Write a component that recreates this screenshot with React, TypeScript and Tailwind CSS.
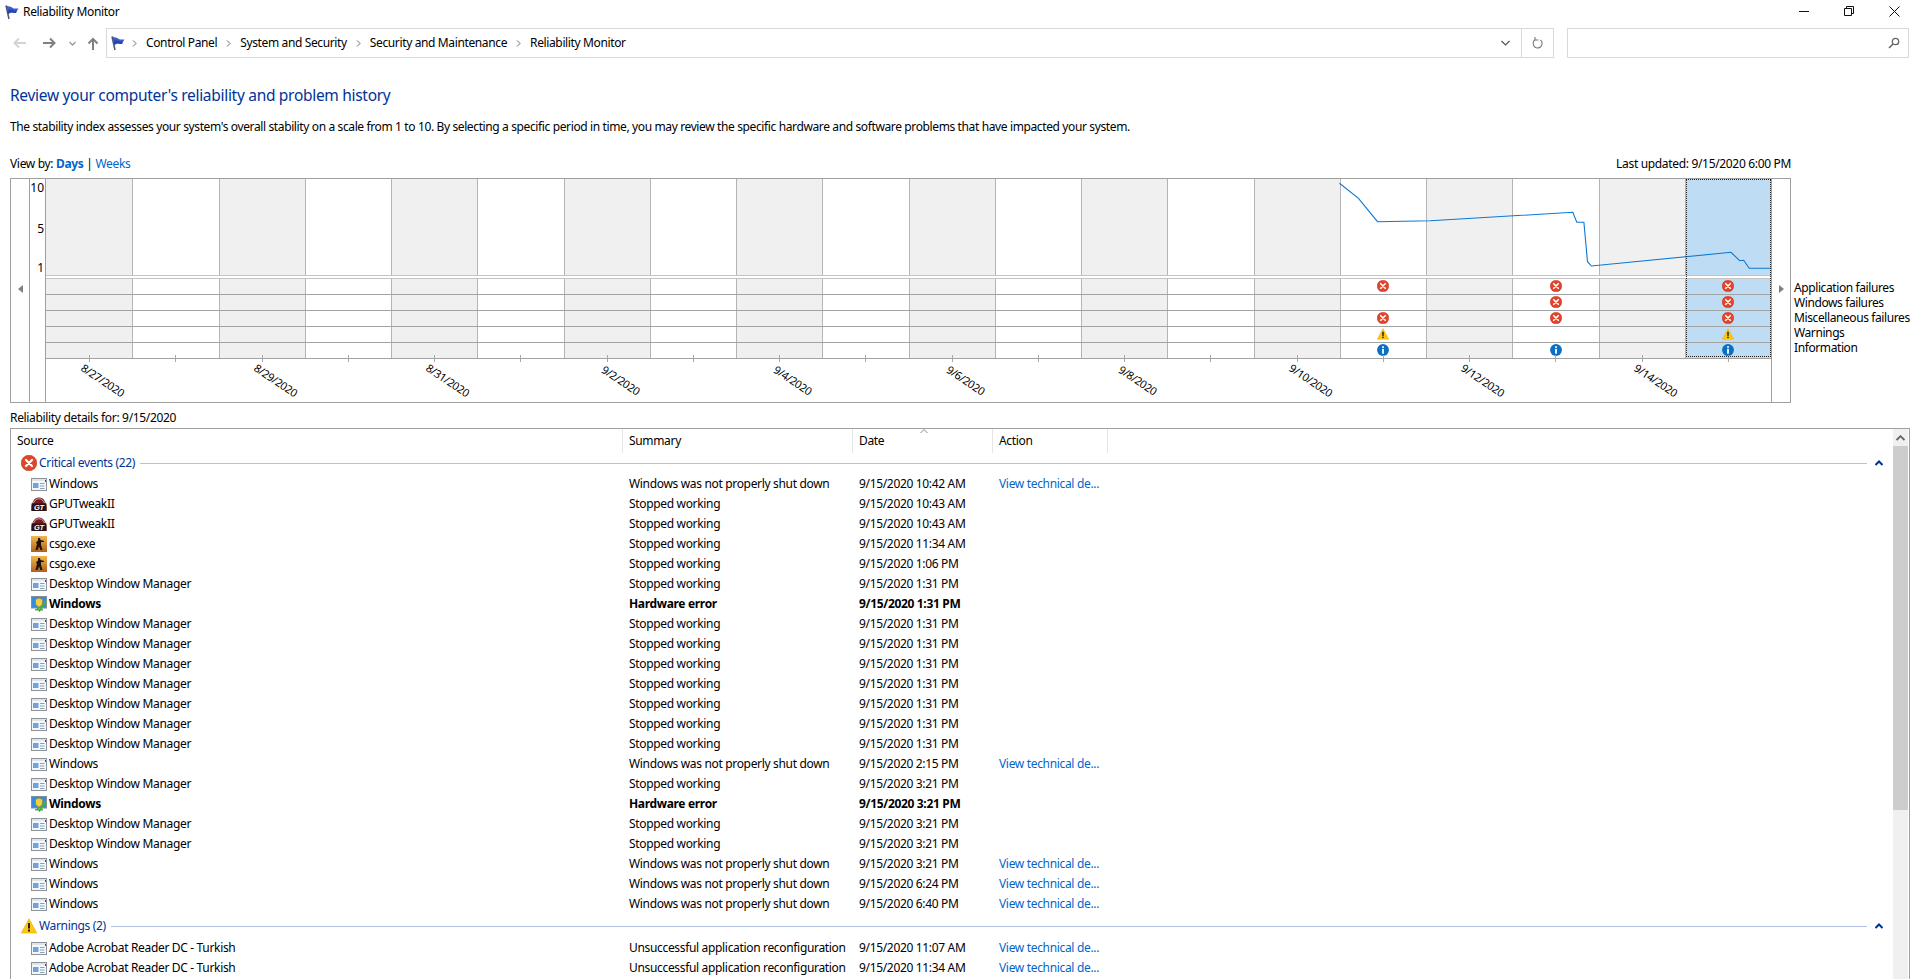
const columns = Array.from({ length: 20 }, (_, i) => i)

const dateLabels: Record<number, string> = {
  0: "8/27/2020",
  2: "8/29/2020",
  4: "8/31/2020",
  6: "9/2/2020",
  8: "9/4/2020",
  10: "9/6/2020",
  12: "9/8/2020",
  14: "9/10/2020",
  16: "9/12/2020",
  18: "9/14/2020",
}

// row -> column -> icon
const chartRows: Record<number, string>[] = [
  { 15: "error", 17: "error", 19: "error" },
  { 17: "error", 19: "error" },
  { 15: "error", 17: "error", 19: "error" },
  { 15: "warn", 19: "warn" },
  { 15: "info", 17: "info", 19: "info" },
]

const legend = ["Application failures", "Windows failures", "Miscellaneous failures", "Warnings", "Information"]

const SHUT = "Windows was not properly shut down"
const STOP = "Stopped working"
const DWM = "Desktop Window Manager"

type Row = { icon: string; source: string; summary: string; date: string; link?: boolean; bold?: boolean }

const critical: Row[] = [
  { icon: "app", source: "Windows", summary: SHUT, date: "9/15/2020 10:42 AM", link: true },
  { icon: "gpu", source: "GPUTweakII", summary: STOP, date: "9/15/2020 10:43 AM" },
  { icon: "gpu", source: "GPUTweakII", summary: STOP, date: "9/15/2020 10:43 AM" },
  { icon: "cs", source: "csgo.exe", summary: STOP, date: "9/15/2020 11:34 AM" },
  { icon: "cs", source: "csgo.exe", summary: STOP, date: "9/15/2020 1:06 PM" },
  { icon: "app", source: DWM, summary: STOP, date: "9/15/2020 1:31 PM" },
  { icon: "hw", source: "Windows", summary: "Hardware error", date: "9/15/2020 1:31 PM", bold: true },
  { icon: "app", source: DWM, summary: STOP, date: "9/15/2020 1:31 PM" },
  { icon: "app", source: DWM, summary: STOP, date: "9/15/2020 1:31 PM" },
  { icon: "app", source: DWM, summary: STOP, date: "9/15/2020 1:31 PM" },
  { icon: "app", source: DWM, summary: STOP, date: "9/15/2020 1:31 PM" },
  { icon: "app", source: DWM, summary: STOP, date: "9/15/2020 1:31 PM" },
  { icon: "app", source: DWM, summary: STOP, date: "9/15/2020 1:31 PM" },
  { icon: "app", source: DWM, summary: STOP, date: "9/15/2020 1:31 PM" },
  { icon: "app", source: "Windows", summary: SHUT, date: "9/15/2020 2:15 PM", link: true },
  { icon: "app", source: DWM, summary: STOP, date: "9/15/2020 3:21 PM" },
  { icon: "hw", source: "Windows", summary: "Hardware error", date: "9/15/2020 3:21 PM", bold: true },
  { icon: "app", source: DWM, summary: STOP, date: "9/15/2020 3:21 PM" },
  { icon: "app", source: DWM, summary: STOP, date: "9/15/2020 3:21 PM" },
  { icon: "app", source: "Windows", summary: SHUT, date: "9/15/2020 3:21 PM", link: true },
  { icon: "app", source: "Windows", summary: SHUT, date: "9/15/2020 6:24 PM", link: true },
  { icon: "app", source: "Windows", summary: SHUT, date: "9/15/2020 6:40 PM", link: true },
]

const warnings: Row[] = [
  { icon: "app", source: "Adobe Acrobat Reader DC - Turkish", summary: "Unsuccessful application reconfiguration", date: "9/15/2020 11:07 AM", link: true },
  { icon: "app", source: "Adobe Acrobat Reader DC - Turkish", summary: "Unsuccessful application reconfiguration", date: "9/15/2020 11:34 AM", link: true },
]

const stabilityLine =
  "1339.5,183.3 1358.5,198.3 1377.5,221.7 1430.5,220.7 1572.8,212.3 1576.8,222.3 1583.9,222.3 1587.5,261.7 1591.4,266 1731,252.3 1739.7,260.7 1743.7,260.3 1749.2,268.3 1770.5,268.3"

function Flag() {
  return (
    <svg width="16" height="16" viewBox="0 0 16 16">
      <path d="M3 1.5 L6 15" stroke="#4a5675" strokeWidth="1.5" fill="none" />
      <path d="M3.5 1.5 C6 3 7 2 9 3.5 C11 5 13 4.5 15.5 4.5 C14.5 6 14 7 13 9 C11 9.5 9.5 8 8 8.5 C7 8.8 6 9.5 5 10 Z" fill="#3b5bd0" />
      <path d="M4.5 6 C7 5 10 6 13.5 7 L13 9 C11 9.5 9.5 8 8 8.5 C7 8.8 6 9.5 5 10 Z" fill="#2a44aa" />
    </svg>
  )
}

function ErrorDot({ size = 12 }: { size?: number }) {
  return (
    <svg width={size} height={size} viewBox="0 0 16 16">
      <circle cx="8" cy="8" r="7.8" fill="#e0452b" />
      <circle cx="8" cy="8" r="7.8" fill="none" stroke="#c4341c" strokeWidth="0.6" />
      <path d="M5 5 L11 11 M11 5 L5 11" stroke="#ffffff" strokeWidth="2.2" strokeLinecap="round" />
    </svg>
  )
}

function WarnDot({ size = 12 }: { size?: number }) {
  return (
    <svg width={size} height={size} viewBox="0 0 16 16">
      <path d="M8 0.8 L15.8 15 L0.2 15 Z" fill="#fcc813" stroke="#e8ac0c" strokeWidth="0.6" />
      <rect x="7" y="5" width="2" height="5.5" fill="#222222" />
      <rect x="7" y="11.5" width="2" height="2" fill="#222222" />
    </svg>
  )
}

function InfoDot() {
  return (
    <svg width="12" height="12" viewBox="0 0 16 16">
      <circle cx="8" cy="8" r="7.9" fill="#0b6fc4" />
      <rect x="6.8" y="6.5" width="2.4" height="6.5" fill="#ffffff" />
      <rect x="6.8" y="3" width="2.4" height="2.2" fill="#ffffff" />
    </svg>
  )
}

function RowIcon({ kind }: { kind: string }) {
  if (kind === "gpu") {
    return (
      <svg width="16" height="15" viewBox="0 0 16 15">
        <path d="M0.5 14 C0 6 3 0.5 8 0.5 C13 0.5 16 6 15.5 14 Z" fill="#7a1a1f" />
        <path d="M2.5 6 C4 2.6 6 1.8 8 1.8 C10 1.8 12 2.6 13.5 6" stroke="#d8b4b4" strokeWidth="1" fill="none" />
        <rect x="0.5" y="6.5" width="15" height="7.5" fill="#2a1215" />
        <text x="8" y="13" textAnchor="middle" fontSize="7.5" fontWeight="700" fontStyle="italic" fill="#ffffff" fontFamily="Liberation Sans, sans-serif">
          GT
        </text>
      </svg>
    )
  }
  if (kind === "cs") {
    return (
      <svg width="16" height="16" viewBox="0 0 16 16">
        <defs>
          <linearGradient id="csBg" x1="0" y1="0" x2="0" y2="1">
            <stop offset="0" stopColor="#f2b650" />
            <stop offset="1" stopColor="#b0601c" />
          </linearGradient>
        </defs>
        <rect width="16" height="16" fill="url(#csBg)" />
        <path d="M7 2 L9 2 L9.5 4 L13 5 L13 6 L10 6 L10 9 L11.5 14 L9.5 14 L8 10.5 L6.5 14 L4.5 14 L6 8 L5 6.5 L7 4.5 Z" fill="#1c1208" />
      </svg>
    )
  }
  if (kind === "hw") {
    return (
      <svg width="16" height="16" viewBox="0 0 16 16">
        <rect x="0.5" y="0.5" width="15" height="11.5" fill="#3a8bdc" stroke="#7d8f9f" />
        <path d="M8 2 L11.5 3.5 L11.5 7 C11.5 9 9.5 10.5 8 11 C6.5 10.5 4.5 9 4.5 7 L4.5 3.5 Z" fill="#f2cf3c" stroke="#8a7420" strokeWidth="0.5" />
        <rect x="4" y="13" width="8" height="1.5" fill="#7f8c96" />
        <path d="M6 11 L8.5 14.5 L15 6" stroke="#3fb62f" strokeWidth="2" fill="none" />
      </svg>
    )
  }
  return (
    <svg width="16" height="13" viewBox="0 0 16 13">
      <rect x="0.5" y="0.5" width="15" height="12" fill="#f4f7fb" stroke="#8d939b" />
      <rect x="1" y="1" width="14" height="2" fill="#dfe4ea" />
      <rect x="2" y="5" width="5.5" height="5" fill="#6ea3dc" />
      <rect x="9" y="5" width="4.5" height="1" fill="#8aa0b8" />
      <rect x="9" y="7.5" width="4.5" height="1" fill="#8aa0b8" />
      <rect x="9" y="10" width="4.5" height="1" fill="#8aa0b8" />
      <rect x="14" y="2" width="1" height="2" fill="#4a4f56" />
    </svg>
  )
}

function CollapseChevron() {
  return (
    <svg width="8" height="6" viewBox="0 0 8 6">
      <path d="M0.5 5 L4 1.5 L7.5 5" stroke="#003399" strokeWidth="2" fill="none" />
    </svg>
  )
}

function GroupHeader({ icon, label, className }: { icon: React.ReactNode; label: string; className: string }) {
  return (
    <div className={`flex items-center pl-[10px] pr-[10px] ${className}`}>
      <div className="w-4 h-4 flex items-center justify-center shrink-0">{icon}</div>
      <span className="ml-[2px] text-[#003399] whitespace-nowrap">{label}</span>
      <div className="flex-1 h-px bg-[#b3c2e3] ml-[5px]" />
      <div className="ml-2 flex items-center">
        <CollapseChevron />
      </div>
    </div>
  )
}

function EventRow({ row }: { row: Row }) {
  return (
    <div className={`flex items-center h-5 whitespace-nowrap ${row.bold ? "font-bold" : ""}`}>
      <div className="w-[618px] flex items-center pl-5">
        <div className="w-4 h-4 flex items-center justify-center">
          <RowIcon kind={row.icon} />
        </div>
        <span className="ml-[2px]">{row.source}</span>
      </div>
      <div className="w-[230px]">{row.summary}</div>
      <div className="w-[140px]">{row.date}</div>
      {row.link && <div className="text-[#0066cc] font-normal">View technical de...</div>}
    </div>
  )
}

function cellBg(c: number) {
  if (c === 19) return "bg-[#bfdcf5]"
  return c % 2 === 0 ? "bg-[#f0f0f0]" : "bg-white"
}

function Stability() {
  return (
    <div className="relative w-[1725px] flex flex-col">
      {/* graph area */}
      <div className="grid grid-cols-20 h-[96px]">
        {columns.map((c) => (
          <div key={c} className={`${c > 0 ? "border-l border-[#b4b4b4]" : ""} ${cellBg(c)}`} />
        ))}
      </div>
      <div className="h-1 bg-white border-y border-[#c4c4c4]" />

      {/* failure rows */}
      {chartRows.map((cells, r) => (
        <div key={r} className="grid grid-cols-20 h-4 border-b border-[#a3a3a3]">
          {columns.map((c) => (
            <div key={c} className={`flex items-center justify-center pb-[2px] ${c > 0 ? "border-l border-[#b4b4b4]" : ""} ${cellBg(c)}`}>
              {cells[c] === "error" && <ErrorDot />}
              {cells[c] === "warn" && <WarnDot />}
              {cells[c] === "info" && <InfoDot />}
            </div>
          ))}
        </div>
      ))}

      {/* dates */}
      <div className="grid grid-cols-20 h-[43px]">
        {columns.map((c) => (
          <div key={c} className="relative">
            <div className="absolute left-1/2 -top-[4px] w-px h-[7px] bg-[#a8a8a8]" />
            {dateLabels[c] && (
              <div className="absolute left-[57px] top-[21px] -translate-x-1/2 -translate-y-1/2 rotate-[34deg] whitespace-nowrap text-[11px] leading-none">{dateLabels[c]}</div>
            )}
          </div>
        ))}
      </div>

      <svg className="absolute left-0 top-0 pointer-events-none" width="1725" height="96" viewBox="46 179 1725 96">
        <polyline points={stabilityLine} fill="none" stroke="#0a78d6" strokeWidth="1.1" />
      </svg>
      <div className="absolute right-0 top-0 w-[85px] h-[178px] border border-dotted border-[#222222] pointer-events-none" />
    </div>
  )
}

export default function App() {
  return (
    <div className="w-full h-[979px] overflow-hidden bg-white text-black text-[12px] leading-5 font-['Noto_Sans',sans-serif] tracking-[-0.33px]">
      {/* TITLE BAR */}
      <div className="h-6 flex items-center pl-[3px]">
        <Flag />
        <span className="ml-1">Reliability Monitor</span>
        <div className="ml-auto mb-[2px] flex items-center pr-[20px] gap-[35px]">
          <svg width="10" height="10" viewBox="0 0 10 10"><path d="M0 5.5 H10" stroke="#111" /></svg>
          <svg width="10" height="10" viewBox="0 0 10 10"><path d="M0.5 2.5 H7.5 V9.5 H0.5 Z M2.5 2.5 V0.5 H9.5 V7.5 H7.5" stroke="#111" fill="none" /></svg>
          <svg width="11" height="11" viewBox="0 0 11 11"><path d="M0.5 0.5 L10.5 10.5 M10.5 0.5 L0.5 10.5" stroke="#111" /></svg>
        </div>
      </div>

      {/* ADDRESS BAR */}
      <div className="mt-1 h-[30px] flex items-center">
        <div className="w-[106px] flex items-center shrink-0">
          <svg className="ml-[13px]" width="13" height="12" viewBox="0 0 13 12"><path d="M13 6 H2 M6 1.5 L1.5 6 L6 10.5" stroke="#d4d4d4" strokeWidth="2" fill="none" /></svg>
          <svg className="ml-[17px]" width="13" height="12" viewBox="0 0 13 12"><path d="M0 6 H11 M7 1.5 L11.5 6 L7 10.5" stroke="#808080" strokeWidth="2" fill="none" /></svg>
          <svg className="ml-[13px]" width="7" height="5" viewBox="0 0 7 5"><path d="M0.5 1 L3.5 4 L6.5 1" stroke="#9a9a9a" strokeWidth="1.3" fill="none" /></svg>
          <svg className="ml-[11px]" width="12" height="13" viewBox="0 0 12 13"><path d="M6 13 V2 M1.5 6.5 L6 2 L10.5 6.5" stroke="#808080" strokeWidth="2" fill="none" /></svg>
        </div>
        <div className="w-[1448px] h-full flex items-center border border-[#d9d9d9] shrink-0">
          <div className="ml-[2px] -mr-[2px]"><Flag /></div>
          {["Control Panel", "System and Security", "Security and Maintenance", "Reliability Monitor"].map((crumb) => (
            <div key={crumb} className="flex items-center">
              <svg className="mx-[9px]" width="5" height="7" viewBox="0 0 5 7"><path d="M1 0.5 L4 3.5 L1 6.5" stroke="#6a6a6a" fill="none" /></svg>
              <span className="tracking-[-0.37px]">{crumb}</span>
            </div>
          ))}
          <svg className="ml-auto mr-[11px]" width="9" height="6" viewBox="0 0 9 6"><path d="M0.5 1 L4.5 5 L8.5 1" stroke="#555" strokeWidth="1.2" fill="none" /></svg>
          <div className="w-8 h-full border-l border-[#d9d9d9] flex items-center justify-center">
            <svg width="11" height="13" viewBox="0 0 11 13"><path d="M3.5 2.5 A4.5 4.5 0 1 0 8.5 3 M3 0 V3 H6.5" stroke="#777" strokeWidth="1.1" fill="none" /></svg>
          </div>
        </div>
        <div className="ml-[13px] w-[342px] h-full border border-[#d9d9d9] flex items-center justify-end pr-[8px] shrink-0">
          <svg width="12" height="12" viewBox="0 0 12 12"><circle cx="7.5" cy="4.5" r="3.2" stroke="#666" strokeWidth="1.3" fill="none" /><path d="M5 7 L1 11" stroke="#666" strokeWidth="1.6" /></svg>
        </div>
      </div>

      {/* PAGE */}
      <div className="pl-[10px]">
        <h1 className="mt-[25px] h-6 leading-6 text-[15.5px] tracking-[-0.3px] text-[#003399]">Review your computer's reliability and problem history</h1>
        <p className="mt-[10px] h-5 tracking-[-0.375px]">The stability index assesses your system's overall stability on a scale from 1 to 10. By selecting a specific period in time, you may review the specific hardware and software problems that have impacted your system.</p>

        <div className="mt-[17px] h-5 w-[1781px] flex items-center justify-between">
          <div>
            View by: <span className="font-bold text-[#0066cc]">Days</span> | <span className="text-[#0066cc]">Weeks</span>
          </div>
          <div>Last updated: 9/15/2020 6:00 PM</div>
        </div>

        {/* CHART */}
        <div className="mt-1 flex">
          <div className="w-[1781px] h-[225px] flex border border-[#a0a0a0] shrink-0">
            <div className="w-[19px] border-r border-[#a0a0a0] flex justify-center pt-[106px]">
              <svg width="5" height="8" viewBox="0 0 5 8"><path d="M5 0 V8 L0 4 Z" fill="#808080" /></svg>
            </div>
            <div className="w-4 border-r border-[#a0a0a0] flex flex-col items-end pr-[1px] pt-px leading-4 tracking-normal">
              <span>10</span>
              <span className="mt-[25px]">5</span>
              <span className="mt-[23px]">1</span>
            </div>
            <Stability />
            <div className="flex-1 border-l border-[#a0a0a0] flex justify-center pt-[106px]">
              <svg width="5" height="8" viewBox="0 0 5 8"><path d="M0 0 V8 L5 4 Z" fill="#808080" /></svg>
            </div>
          </div>
          <div className="ml-[3px] pt-[102px] leading-[15px] whitespace-nowrap tracking-[-0.4px]">
            {legend.map((item) => (
              <div key={item}>{item}</div>
            ))}
          </div>
        </div>

        <div className="mt-[5px] h-5">Reliability details for: 9/15/2020</div>

        {/* DETAILS */}
        <div className="w-[1900px] h-[600px] flex border border-[#a0a0a0]">
          <div className="relative flex-1">
            <div className="flex h-6 leading-6">
              <div className="w-[612px] pl-[6px] border-r border-[#e5e5e5]">Source</div>
              <div className="w-[230px] pl-[6px] border-r border-[#e5e5e5]">Summary</div>
              <div className="w-[140px] pl-[6px] border-r border-[#e5e5e5]">Date</div>
              <div className="w-[115px] pl-[6px] border-r border-[#e5e5e5]">Action</div>
            </div>
            <svg className="absolute left-[909px] top-0" width="8" height="5" viewBox="0 0 8 5"><path d="M0.5 4 L4 0.5 L7.5 4" stroke="#888" fill="none" /></svg>

            <GroupHeader icon={<ErrorDot size={16} />} label="Critical events (22)" className="h-5 mb-px" />
            {critical.map((row, i) => (
              <EventRow key={i} row={row} />
            ))}

            <GroupHeader icon={<WarnDot size={16} />} label="Warnings (2)" className="h-6" />
            {warnings.map((row, i) => (
              <EventRow key={i} row={row} />
            ))}
          </div>

          {/* SCROLLBAR */}
          <div className="w-[15px] mr-px flex flex-col bg-[#f0f0f0]">
            <div className="h-[17px] flex items-center justify-center">
              <svg width="9" height="6" viewBox="0 0 9 6"><path d="M0.5 5 L4.5 1.2 L8.5 5" stroke="#606060" strokeWidth="1.8" fill="none" /></svg>
            </div>
            <div className="h-[364px] bg-[#cdcdcd]" />
          </div>
        </div>
      </div>
    </div>
  )
}
